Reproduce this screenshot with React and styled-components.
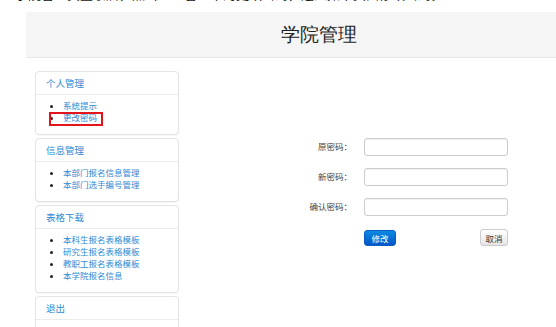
import React from "react";
import styled, { createGlobalStyle } from "styled-components";

const Global = createGlobalStyle`
  html, body { margin: 0; padding: 0; background: #fff; overflow: hidden; }
  body { font-family: "Noto Sans CJK SC", "Liberation Sans", sans-serif; }
`;

const Caption = styled.div`
  height: 2px;
  overflow: hidden;
  padding-left: 15px;
  font-size: 13px;
  line-height: 14px;
  color: #111;
  white-space: nowrap;
`;

const CaptionText = styled.div`
  margin-top: -13px;
`;

const Header = styled.header`
  margin: 10px 0 0 26px;
  height: 45px;
  background: #f5f5f5;
  border-bottom: 1px solid #e6e6e6;
  padding-left: 255px;
`;

const Title = styled.h1`
  margin: 0;
  font-family: serif;
  font-weight: normal;
  font-size: 19px;
  line-height: 45px;
  color: #222;
`;

const Content = styled.div`
  display: flex;
  align-items: flex-start;
  margin: 13px 0 0 35px;
`;

const Sidebar = styled.nav`
  width: 144px;
  display: flex;
  flex-direction: column;
  gap: 3px;
  flex-shrink: 0;
`;

const Panel = styled.section`
  border: 1px solid #e3e3e3;
  border-radius: 4px;
  background: #fff;
  box-shadow: 0 1px 1px rgba(0, 0, 0, 0.04);
`;

const PanelHeading = styled.div`
  height: 22px;
  line-height: 22px;
  padding: 0 10px;
  font-size: 9.5px;
  color: #2e8ad4;
  border-bottom: 1px solid #ececec;
`;

const PanelBody = styled.ul`
  margin: 0;
  padding: 4px 10px 11px 27px;
  list-style: disc;
`;

const Item = styled.li`
  position: relative;
  font-size: 8.5px;
  line-height: 12px;
  color: #2e8ad4;
  &::marker { color: #222; }
  ${(p) =>
    p.$highlight &&
    `
    &::after {
      content: '';
      position: absolute;
      left: -14px;
      top: 1px;
      width: 54px;
      height: 14px;
      box-sizing: border-box;
      border: 2px solid #e3141b;
    }
  `}
`;

const Main = styled.main`
  flex: 1;
  padding: 67px 0 0 109px;
`;

const Form = styled.form`
  display: grid;
  grid-template-columns: 60px 144px;
  column-gap: 16px;
  row-gap: 12px;
  align-items: center;
`;

const Label = styled.label`
  text-align: right;
  margin-right: -4px;
  font-size: 8.5px;
  color: #444;
  position: relative;
  top: -1px;
`;

const Input = styled.input`
  box-sizing: border-box;
  width: 144px;
  height: 18px;
  border: 1px solid #cccccc;
  border-radius: 3px;
  box-shadow: inset 0 1px 1px rgba(0, 0, 0, 0.06);
  outline: none;
  padding: 0 4px;
`;

const Actions = styled.div`
  grid-column: 2;
  display: flex;
  justify-content: space-between;
  align-items: center;
  margin-top: 1px;
`;

const Button = styled.button`
  box-sizing: border-box;
  height: ${(p) => (p.$primary ? "16px" : "17px")};
  width: ${(p) => (p.$primary ? "32px" : "28px")};
  padding: 0;
  font-family: "Noto Sans CJK SC", sans-serif;
  font-size: 8.5px;
  border-radius: 3px;
  cursor: pointer;
  color: ${(p) => (p.$primary ? "#fff" : "#333")};
  border: 1px solid ${(p) => (p.$primary ? "#0b5dc4" : "#cccccc")};
  background: ${(p) =>
    p.$primary
      ? "linear-gradient(#0a8ae0, #0457c8)"
      : "linear-gradient(#ffffff, #e6e6e6)"};
`;

const menus = [
  { title: "个人管理", items: ["系统提示", "更改密码"], hl: 1 },
  { title: "信息管理", items: ["本部门报名信息管理", "本部门选手编号管理"] },
  {
    title: "表格下载",
    items: ["本科生报名表格模板", "研究生报名表格模板", "教职工报名表格模板", "本学院报名信息"],
  },
  { title: "退出", items: [] },
];

export default function App() {
  return (
    <>
      <Global />
      <Caption>
        <CaptionText>
          学院管理员登录后，点击个人管理中的更改密码，进入如下页面修改密码。
        </CaptionText>
      </Caption>
      <Header>
        <Title>学院管理</Title>
      </Header>
      <Content>
        <Sidebar>
          {menus.map((m) => (
            <Panel key={m.title}>
              <PanelHeading>{m.title}</PanelHeading>
              <PanelBody>
                {m.items.map((it, i) => (
                  <Item key={it} $highlight={m.hl === i}>
                    {it}
                  </Item>
                ))}
              </PanelBody>
            </Panel>
          ))}
        </Sidebar>
        <Main>
          <Form onSubmit={(e) => e.preventDefault()}>
            <Label>原密码：</Label>
            <Input type="password" />
            <Label>新密码：</Label>
            <Input type="password" />
            <Label>确认密码：</Label>
            <Input type="password" />
            <Actions>
              <Button $primary type="submit">修改</Button>
              <Button type="button">取消</Button>
            </Actions>
          </Form>
        </Main>
      </Content>
    </>
  );
}
